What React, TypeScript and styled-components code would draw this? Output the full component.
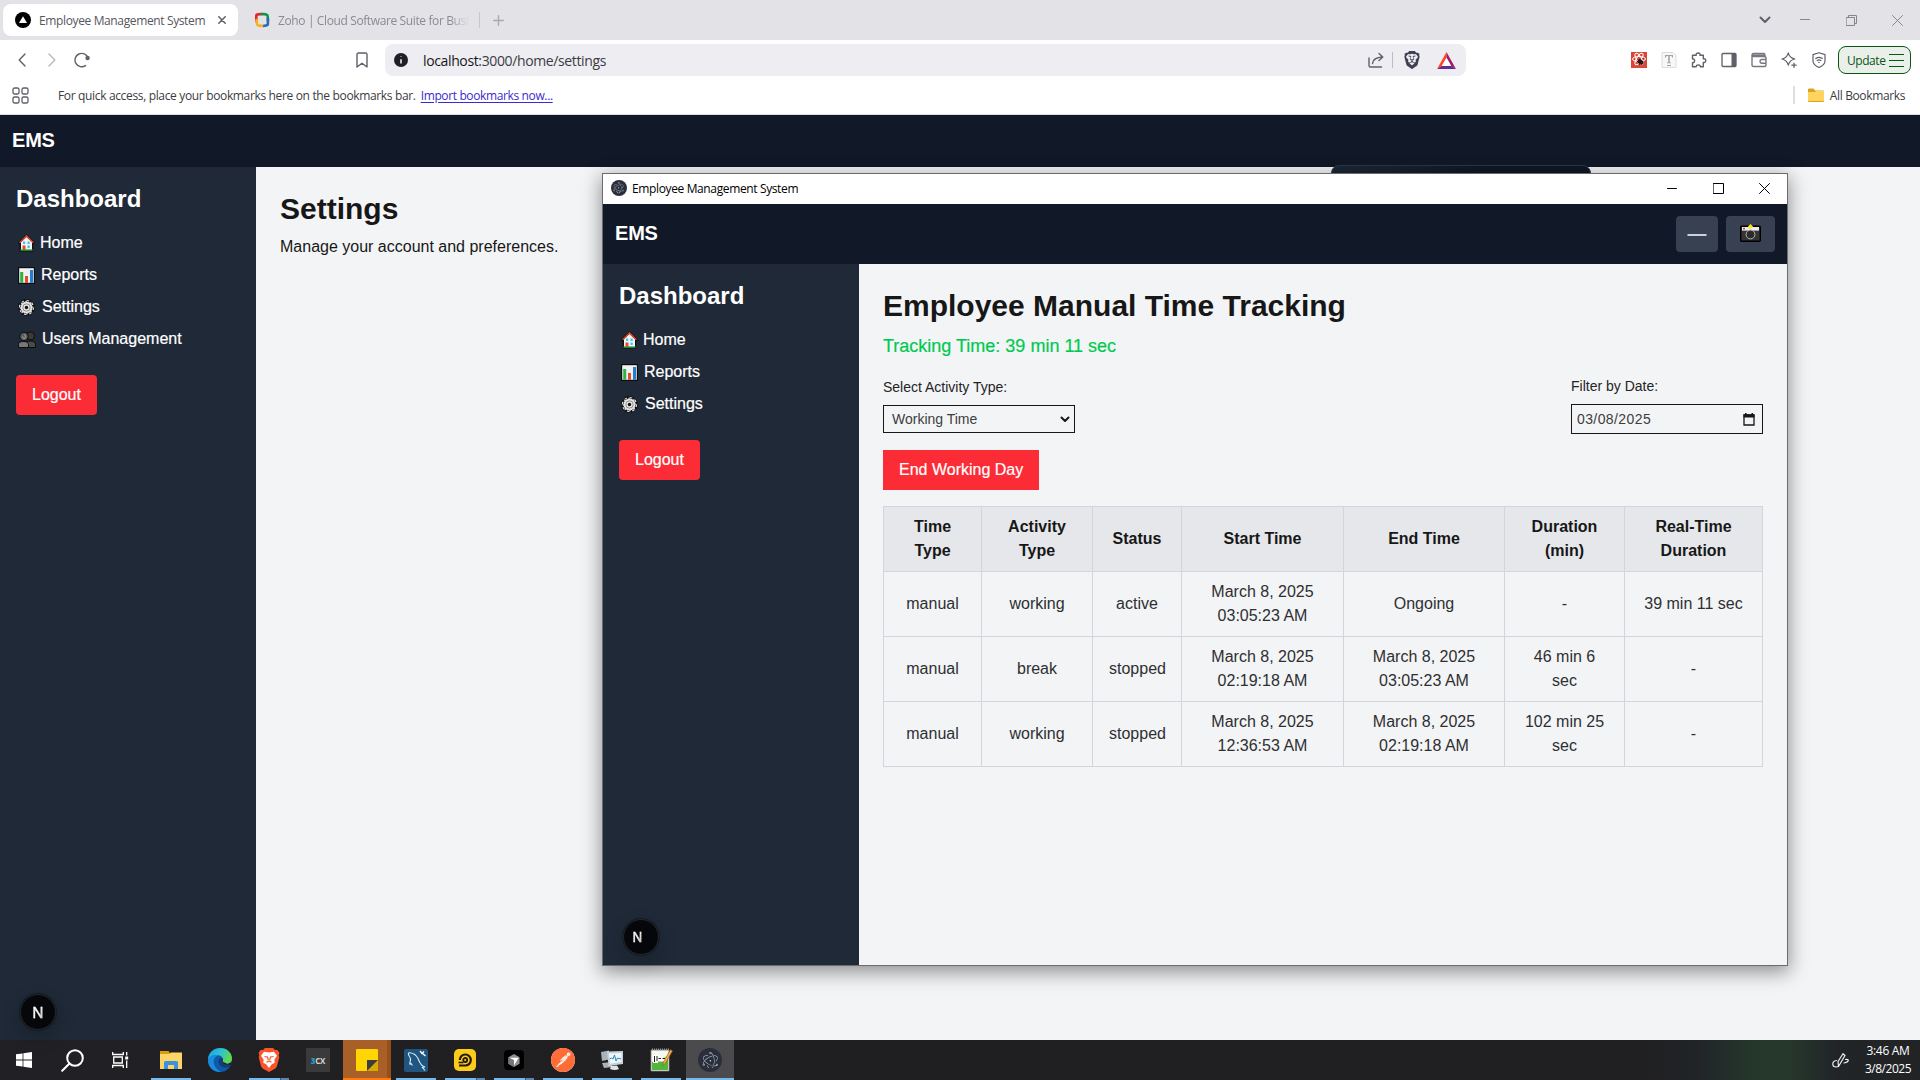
import React from "react";
import styled, { createGlobalStyle, css } from "styled-components";
import { SiBrave, SiElectron, SiPostman } from "react-icons/si";

const uiFont = `"Open Sans", "Noto Sans", sans-serif`;
const webFont = `"Liberation Sans", Arial, sans-serif`;

const GlobalStyle = createGlobalStyle`
  * { box-sizing: border-box; margin: 0; padding: 0; }
  html, body { width: 1920px; height: 1080px; overflow: hidden; }
  body { font-family: ${webFont}; color: #171717; }
  svg { display: block; flex: none; }
  button { border: 0; background: none; font: inherit; color: inherit; }
`;

/* ---------- desktop ---------- */
const Desktop = styled.div`
  position: relative;
  width: 1920px;
  height: 1080px;
  display: flex;
  flex-direction: column;
  overflow: hidden;
`;

const UiText = styled.span<{ $color?: string; $size?: number; $track?: number }>`
  font-family: ${uiFont};
  font-size: ${(p) => p.$size ?? 12}px;
  letter-spacing: ${(p) => p.$track ?? -0.37}px;
  color: ${(p) => p.$color ?? "#3b3b43"};
  white-space: nowrap;
`;

/* ---------- browser chrome ---------- */
const TabStrip = styled.div`
  flex: none;
  height: 40px;
  padding: 4px 0 4px 3px;
  display: flex;
  align-items: center;
  background: #e3e2e7;
`;
const Tab = styled.div<{ $active?: boolean }>`
  display: flex;
  align-items: center;
  height: 32px;
  border-radius: 8px;
  ${(p) =>
    p.$active
      ? css`
          width: 235px;
          padding-left: 12px;
          background: #fff;
        `
      : css`
          width: 241px;
          padding-left: 16px;
        `}
`;
const TabLabel = styled(UiText)<{ $w: number; $fade?: boolean }>`
  width: ${(p) => p.$w}px;
  margin-left: 8px;
  ${(p) =>
    p.$fade &&
    css`
      mask-image: linear-gradient(90deg, #000 90%, transparent);
    `}
`;
const VLine = styled.i<{ $h: number; $color: string; $w?: number }>`
  flex: none;
  width: ${(p) => p.$w ?? 1}px;
  height: ${(p) => p.$h}px;
  background: ${(p) => p.$color};
`;
const Spacer = styled.div`
  flex: 1;
`;
const Slot = styled.div<{ $w?: number; $padLeft?: number }>`
  flex: none;
  width: ${(p) => p.$w ?? 30}px;
  padding-left: ${(p) => p.$padLeft ?? 0}px;
  display: flex;
  align-items: center;
  justify-content: center;
`;
const Toolbar = styled.div`
  flex: none;
  height: 40px;
  padding: 0 9px 0 7px;
  display: flex;
  align-items: center;
  background: #fff;
`;
const NavSlots = styled.div`
  display: flex;
  width: 340px;
`;
const AddressBar = styled.div`
  width: 1081px;
  height: 32px;
  margin: 0 158px 0 8px;
  padding: 0 4px 0 8px;
  display: flex;
  align-items: center;
  border-radius: 8px;
  background: #eeedf2;
`;
const Url = styled(UiText)`
  margin-left: 14px;
  b {
    font-weight: 400;
    color: #17171c;
  }
`;
const UpdateButton = styled.button`
  width: 73px;
  height: 28px;
  margin-left: 4px;
  padding: 0 6px 0 8px;
  display: flex;
  align-items: center;
  justify-content: space-between;
  border: 1px solid #0b5512;
  border-radius: 8px;
  background: #e9f0ea;
`;
const Burger = styled.span`
  width: 15px;
  height: 13px;
  border: solid #0b5512;
  border-width: 1px 0;
  display: flex;
  align-items: center;
  &::before {
    content: "";
    width: 100%;
    height: 1px;
    background: #0b5512;
  }
`;
const BookmarksBar = styled.div`
  flex: none;
  height: 35px;
  padding: 0 15px 4px 12px;
  display: flex;
  align-items: center;
  border-bottom: 1px solid #dcdce0;
  background: #fff;
`;
const ImportLink = styled(UiText)`
  margin-left: 5px;
  text-decoration: underline;
  text-underline-offset: 2px;
`;

/* ---------- EMS web app ---------- */
const Page = styled.div`
  flex: 1;
  min-height: 0;
  display: flex;
  flex-direction: column;
  background: #f3f4f6;
`;
const TopBar = styled.header<{ $h: number }>`
  flex: none;
  height: ${(p) => p.$h}px;
  padding: 0 12px;
  display: flex;
  align-items: center;
  gap: 8px;
  background: #111827;
`;
const Brand = styled.div`
  flex: 1;
  padding-bottom: 2px;
  font-size: 20px;
  font-weight: 700;
  line-height: 28px;
  letter-spacing: -0.2px;
  color: #fff;
`;
const Columns = styled.div`
  flex: 1;
  min-height: 0;
  display: flex;
`;
const SideBar = styled.aside`
  flex: none;
  width: 256px;
  padding: 16px;
  background: #1f2937;
  color: #fff;
`;
const SideTitle = styled.h2`
  margin-bottom: 16px;
  font-size: 24px;
  line-height: 32px;
  font-weight: 700;
`;
const NavList = styled.ul`
  list-style: none;
  display: flex;
  flex-direction: column;
  gap: 8px;
`;
const NavItem = styled.li<{ $icon: number }>`
  display: flex;
  align-items: center;
  height: 24px;
  font-size: 16px;
  -webkit-text-stroke: 0.2px #fff;
  > svg {
    margin: 0 ${(p) => p.$icon}px 0 2px;
  }
`;
const RedButton = styled.button<{ $rounded?: boolean; $top: number }>`
  display: block;
  height: 40px;
  margin-top: ${(p) => p.$top}px;
  padding: 0 16px;
  border-radius: ${(p) => (p.$rounded ? 4 : 0)}px;
  background: #fb2c36;
  color: #fff;
  font-size: 16px;
  -webkit-text-stroke: 0.2px #fff;
`;
const Main = styled.main`
  flex: 1;
  min-width: 0;
  padding: 24px;
`;
const Heading = styled.h1`
  font-size: 30px;
  line-height: 36px;
  font-weight: 700;
  margin-bottom: 8px;
  white-space: nowrap;
`;
const Paragraph = styled.p`
  font-size: 16px;
  line-height: 24px;
`;
const DevBadge = styled.div<{ $x: number; $y: number; $shift?: number }>`
  position: absolute;
  left: ${(p) => p.$x}px;
  top: ${(p) => p.$y}px;
  width: 36px;
  height: 36px;
  padding-right: ${(p) => p.$shift ?? 0}px;
  border-radius: 50%;
  display: flex;
  align-items: center;
  justify-content: center;
  background: #05070a;
  border: 1px solid #26282b;
  box-shadow: 0 0 0 1px #131a24, 0 8px 20px rgba(0, 0, 0, 0.18);
  span {
    font: 400 ${(p) => (p.$shift ? 13 : 15)}px/1 Inter, sans-serif;
    color: transparent;
    background: linear-gradient(100deg, #fff 60%, #888);
    background-clip: text;
    -webkit-text-stroke: 0.3px rgba(255, 255, 255, 0.6);
  }
`;

/* ---------- floating desktop window ---------- */
const HiddenPopup = styled.div`
  position: absolute;
  left: 1331px;
  top: 165px;
  width: 260px;
  height: 40px;
  border-radius: 8px;
  border: 1px solid #2b3644;
  background: linear-gradient(90deg, #1c2836, #101725 60%);
`;
const Window = styled.section`
  position: absolute;
  left: 602px;
  top: 173px;
  width: 1186px;
  height: 793px;
  display: flex;
  flex-direction: column;
  border: 1px solid #6b6c6e;
  background: #f3f4f6;
  box-shadow: 0 5px 18px 1px rgba(0, 0, 0, 0.42);
`;
const TitleBar = styled.div`
  flex: none;
  height: 30px;
  padding: 0 0 2px 8px;
  display: flex;
  align-items: center;
  background: #fff;
`;
const AppIcon = styled.span<{ $size: number }>`
  flex: none;
  width: ${(p) => p.$size}px;
  height: ${(p) => p.$size}px;
  display: flex;
  align-items: center;
  justify-content: center;
  border-radius: 50%;
  background: #2b2e3a;
  color: #bfdfe4;
`;
const WinTitle = styled(UiText)`
  flex: 1;
  margin-left: 5px;
`;
const HeaderButton = styled.button<{ $w: number }>`
  width: ${(p) => p.$w}px;
  height: 36px;
  padding-bottom: 2px;
  display: flex;
  align-items: center;
  justify-content: center;
  border-radius: 4px;
  background: #374151;
`;
const HeaderActions = styled.div`
  display: flex;
  gap: 8px;
`;
const Tracking = styled.p`
  font-size: 18px;
  line-height: 28px;
  color: #00c951;
  margin-bottom: 16px;
  -webkit-text-stroke: 0.2px #00c951;
`;
const Filters = styled.div`
  display: flex;
  justify-content: space-between;
  align-items: center;
`;
const Field = styled.label`
  width: 192px;
  font-size: 14px;
  line-height: 20px;
  color: #232425;
`;
const FieldBox = styled.div<{ $h: number; $padLeft: number; $padRight: number; $track?: number }>`
  height: ${(p) => p.$h}px;
  margin-top: 8px;
  padding: 0 ${(p) => p.$padRight}px 0 ${(p) => p.$padLeft}px;
  display: flex;
  align-items: center;
  justify-content: space-between;
  border: 1px solid #171717;
  color: #3c3d3f;
  letter-spacing: ${(p) => p.$track ?? 0}px;
`;
const Table = styled.table`
  width: 879px;
  margin-top: 16px;
  border-collapse: collapse;
  table-layout: fixed;
  font-size: 16px;
  line-height: 24px;
  text-align: center;
  th,
  td {
    height: 65px;
    padding: 8px 16px;
    border: 1px solid #d1d5dc;
    vertical-align: middle;
  }
  th {
    font-weight: 700;
    background: #e5e7eb;
  }
  td {
    color: #2e2f31;
  }
`;

/* ---------- taskbar ---------- */
const TaskBar = styled.footer`
  flex: none;
  height: 40px;
  display: flex;
  background: linear-gradient(90deg, #212125 0, #1f1f21 40%, #202022 1650px, #212528 1700px, #26372c 1755px, #26372c 1790px, #212528 1835px, #222325 100%);
`;
const Task = styled.div<{ $bg?: string; $gap?: number }>`
  position: relative;
  width: 48px;
  margin-right: ${(p) => p.$gap ?? 1}px;
  display: flex;
  align-items: center;
  justify-content: center;
  background: ${(p) => p.$bg ?? "transparent"};
`;
const Running = styled.i<{ $stack?: boolean; $full?: boolean; $color?: string }>`
  position: absolute;
  bottom: 0;
  left: ${(p) => (p.$full ? 0 : 4)}px;
  width: ${(p) => (p.$full ? 48 : 40)}px;
  height: 2px;
  background: ${(p) => p.$color ?? (p.$stack ? "linear-gradient(90deg, #76b9ed 31px, #36587a 31px, #36587a 32px, #5a86ad 32px)" : "#76b9ed")};
`;
const Tile = styled.span<{ $bg: string; $size: number; $radius?: number }>`
  width: ${(p) => p.$size}px;
  height: ${(p) => p.$size}px;
  border-radius: ${(p) => p.$radius ?? 0}px;
  display: flex;
  align-items: center;
  justify-content: center;
  background: ${(p) => p.$bg};
`;
const ThreeCx = styled.span`
  font: 700 8px ${uiFont};
  letter-spacing: -0.2px;
  color: #d4d4d4;
  b {
    color: #1d9bd1;
  }
`;
const Clock = styled.div`
  width: 64px;
  padding: 2px 0;
  display: flex;
  flex-direction: column;
  align-items: center;
  justify-content: center;
  line-height: 18px;
`;

/* ---------- icons ---------- */
type LineProps = { w?: number; h?: number; box: string; color?: string; sw?: number; children: React.ReactNode };
const Line = ({ w = 16, h = 16, box, color = "#5f6069", sw = 1.4, children }: LineProps) => (
  <svg width={w} height={h} viewBox={box} fill="none" stroke={color} strokeWidth={sw} strokeLinecap="round" strokeLinejoin="round">
    {children}
  </svg>
);

const Globe = () => (
  <svg width="16" height="16" viewBox="0 0 16 16">
    <circle cx="8" cy="8" r="8" />
    <path d="M8 4.2 12 11H4z" fill="#fff" />
  </svg>
);
const ZohoIcon = () => (
  <svg width="16" height="16" viewBox="0 0 16 16" fill="none" strokeWidth="2.6" strokeLinecap="round">
    <path d="M2.3 9V4Q2.3 2.5 4 2.4L8.5 2" stroke="#e42527" />
    <path d="M8 2l4.2.4Q13.6 2.7 13.7 4l.2 4" stroke="#089949" />
    <path d="M13.9 7v4.6q0 1.7-1.6 1.9L9 14" stroke="#226db4" />
    <path d="M2.5 8l.5 3.8Q3.2 13.4 5 13.6l3 .3" stroke="#f9b21d" />
  </svg>
);
const BatIcon = () => (
  <svg width="19" height="17" viewBox="0 0 20 18">
    <path d="M10 0 0 18l5-3 5-9z" fill="#ff4724" />
    <path d="M10 0 20 18l-5-3-5-9z" fill="#9e1f63" />
    <path d="M0 18h20l-5-3.2H5z" fill="#662d91" />
    <path d="M10 6 5 14.8h10z" fill="#fff" />
  </svg>
);
const RedExtension = () => (
  <svg width="16" height="16" viewBox="0 0 16 16">
    <rect width="16" height="16" fill="#dc4437" />
    <g fill="none" stroke="#fff" strokeWidth="1">
      <ellipse cx="8" cy="7" rx="6.5" ry="2.5" />
      <ellipse cx="8" cy="7" rx="6.5" ry="2.5" transform="rotate(60 8 7)" />
      <ellipse cx="8" cy="7" rx="6.5" ry="2.5" transform="rotate(120 8 7)" />
    </g>
    <ellipse cx="9.5" cy="10" rx="3.2" ry="2.4" transform="rotate(40 9.5 10)" fill="#221a1a" />
    <path d="m6 10 2-2m0 5 1.5-2m2-4L12.500 6" stroke="#221a1a" />
  </svg>
);
const TypeExtension = () => (
  <svg width="16" height="16" viewBox="0 0 16 16">
    <path d="M1 .5h11l3 3v12H1z" fill="#f7f7f7" stroke="#dcdcdc" />
    <path d="M4 3h8v2.500h-.8L10.500 4H8.800v6.500H10v.8H6v-.8h1.200V4H5.500l-.7 1.500H4zM6 13h4v.9H6z" fill="#a3a3a3" />
  </svg>
);
const Folder = () => (
  <svg width="16" height="14" viewBox="0 0 16 14">
    <path d="M0 1.500Q0 .5 1 .5h4.500L7 2.500h8q1 0 1 1V13q0 1-1 1H1q-1 0-1-1z" fill="#d9a520" />
    <path d="M0 4h7l1-1h8v9.200q0 .8-.8.8H.8q-.8 0-.8-.8z" fill="#ffd45e" />
  </svg>
);

const HouseEmoji = () => (
  <svg width="17" height="18" viewBox="0 0 17 18">
    <path d="M8.500.5 16.500 8v2l-1.300.5V17.500H1.500V10.500L.5 10V8z" fill="#111" />
    <path d="M8.500 3 14 8.300V16H3V8.300z" fill="#f4f4f4" />
    <path d="M1.600 8.800 8.500 2l6.900 6.800" fill="none" stroke="#e8492f" strokeWidth="1.400" />
    <path d="M5 7.500h2.200V10H5zM9.500 7.500h2.200V10H9.500zM9.500 11.500h2.200V14H9.500z" fill="#39c5f3" />
    <path d="M4.500 11.500h3V16h-3z" fill="#e8492f" />
    <path d="M2.500 16h12" stroke="#2eae3c" strokeWidth="1.400" />
  </svg>
);
const ChartEmoji = () => (
  <svg width="17" height="17" viewBox="0 0 17 17">
    <rect width="17" height="17" fill="#0c0c0c" />
    <rect x="1.200" y="1.200" width="14.600" height="14.600" fill="#f1f1f1" />
    <rect x="2.200" y="5" width="3" height="10.800" fill="#2fb344" />
    <rect x="7" y="9" width="3" height="6.800" fill="#e8492f" />
    <rect x="12" y="3" width="3" height="12.800" fill="#1f7fd1" />
  </svg>
);
const GearEmoji = () => (
  <svg width="17" height="17" viewBox="0 0 17 17">
    <circle cx="8.500" cy="8.500" r="6.800" fill="#e4e4e4" stroke="#0c0c0c" strokeWidth="3.400" strokeDasharray="4 1.340" />
    <circle cx="8.500" cy="8.500" r="7" fill="none" stroke="#e4e4e4" strokeWidth="1.200" strokeDasharray="2.600 2.900" />
    <circle cx="8.500" cy="8.500" r="6" fill="#e4e4e4" />
    <circle cx="8.500" cy="8.500" r="3.700" fill="none" stroke="#8d8d8d" strokeWidth="1" />
    <circle cx="8.500" cy="8.500" r="1.700" fill="#111" />
  </svg>
);
const PeopleEmoji = () => (
  <svg width="18" height="18" viewBox="0 0 18 18">
    <path d="M8 17.500v-3Q8 11 12.500 11q5 0 5 3.500v3z" fill="#4a4a4a" stroke="#0c0c0c" />
    <circle cx="12.500" cy="6" r="4" fill="#3a3a3a" stroke="#0c0c0c" />
    <path d="M.5 17.500v-2.800Q.5 11.500 5.500 11.500t5 3.200v2.800z" fill="#777" stroke="#0c0c0c" />
    <circle cx="6" cy="6.500" r="4.200" fill="#5c5c5c" stroke="#0c0c0c" />
    <path d="M4.500 6.500q0 2 1.500 2t1.500-2T6 4.500" fill="none" stroke="#aaa" strokeWidth=".8" />
  </svg>
);
const CameraEmoji = () => (
  <svg width="21" height="18" viewBox="0 0 21 18">
    <rect x=".7" y="2.200" width="19.600" height="15" rx="1" fill="#343434" stroke="#000" strokeWidth="1.400" />
    <rect x="2" y="3" width="17" height="3.600" fill="#ececec" />
    <rect x="3" y="3.800" width="2" height="1.600" fill="#e33" />
    <circle cx="10.500" cy="10.500" r="4.400" fill="#2a2a2a" stroke="#b5b5b5" strokeWidth="1" />
    <path d="M10.500 0 13 2.500 10.500 5 8 2.500z" fill="#ffe800" />
  </svg>
);
const Electron = ({ s }: { s: number }) => (
  <AppIcon $size={s}>
    <SiElectron size={s * 0.7} />
  </AppIcon>
);

const NAV = [
  { label: "Home", gap: 5, icon: <HouseEmoji /> },
  { label: "Reports", gap: 6, icon: <ChartEmoji /> },
  { label: "Settings", gap: 7, icon: <GearEmoji /> },
  { label: "Users Management", gap: 6, icon: <PeopleEmoji /> },
];

const SidePanel = ({ count }: { count: number }) => (
  <SideBar>
    <SideTitle>Dashboard</SideTitle>
    <NavList>
      {NAV.slice(0, count).map((n) => (
        <NavItem key={n.label} $icon={n.gap}>
          {n.icon}
          {n.label}
        </NavItem>
      ))}
    </NavList>
    <RedButton $rounded $top={24}>
      Logout
    </RedButton>
  </SideBar>
);

const COLS = [98, 111, 89, 162, 161, 120, 138];
const HEADS = ["Time Type", "Activity Type", "Status", "Start Time", "End Time", "Duration (min)", "Real-Time Duration"];
const ROWS = [
  ["manual", "working", "active", "March 8, 2025 03:05:23 AM", "Ongoing", "-", "39 min 11 sec"],
  ["manual", "break", "stopped", "March 8, 2025 02:19:18 AM", "March 8, 2025 03:05:23 AM", "46 min 6 sec", "-"],
  ["manual", "working", "stopped", "March 8, 2025 12:36:53 AM", "March 8, 2025 02:19:18 AM", "102 min 25 sec", "-"],
];

const BrowserChrome = () => (
  <>
    <TabStrip>
      <Tab $active>
        <Globe />
        <TabLabel $w={167} $color="#56565e">Employee Management System</TabLabel>
        <Slot $w={32}>
          <Line w={8} h={8} box="0 0 8 8" sw={1.5}><path d="M.8.800l6.400 6.400M7.200.800.800 7.200" /></Line>
        </Slot>
      </Tab>
      <Tab>
        <ZohoIcon />
        <TabLabel $w={191} $fade $color="#8a8a91" $track={-0.38}>Zoho | Cloud Software Suite for Busi</TabLabel>
      </Tab>
      <VLine $h={16} $color="#c8c7cd" />
      <Slot $w={36}>
        <Line w={11} h={11} box="0 0 11 11" color="#a9a9af"><path d="M5.500.700v9.600M.700 5.500h9.600" /></Line>
      </Slot>
      <Spacer />
      <Slot $w={34}>
        <Line w={12} h={8} box="0 0 12 8" sw={2}><path d="M1.500 1.500 6 6l4.500-4.500" /></Line>
      </Slot>
      <Slot $w={46}>
        <Line w={10} h={10} box="0 0 10 10" color="#85858b" sw={1}><path d="M.5 4.500h9" /></Line>
      </Slot>
      <Slot $w={46}>
        <Line w={11} h={11} box="0 0 11 11" color="#85858b" sw={1}><path d="M.5 2.500h8v8h-8zM2.500 2.500v-2h8v8h-2" /></Line>
      </Slot>
      <Slot $w={46}>
        <Line w={11} h={11} box="0 0 11 11" color="#85858b" sw={1}><path d="M.500.500l10 10M10.500.500l-10 10" /></Line>
      </Slot>
    </TabStrip>

    <Toolbar>
      <NavSlots>
        <Slot><Line w={8} h={14} box="0 0 8 14"><path d="M7 1 1.200 7 7 13" /></Line></Slot>
        <Slot><Line w={8} h={14} box="0 0 8 14" color="#b9b9be"><path d="M1 1l5.800 6L1 13" /></Line></Slot>
        <Slot>
          <svg width="16" height="16" viewBox="0 0 16 16" fill="none" stroke="#5f6069" strokeWidth="1.400" strokeLinecap="round">
            <path d="M11.500 13.600A6.700 6.700 0 1 1 14 5.800" />
            <circle cx="13.600" cy="6" r="1.500" fill="#5f6069" />
          </svg>
        </Slot>
      </NavSlots>
      <Slot><Line w={12} h={16} box="0 0 12 16"><path d="M1 2.500Q1 1 2.500 1h7Q11 1 11 2.500V15l-5-3.800L1 15z" /></Line></Slot>
      <AddressBar>
        <svg width="16" height="16" viewBox="0 0 16 16">
          <circle cx="8" cy="8" r="7" fill="#1f1f27" />
          <path d="M8 4.500v.6M8 7.200V11.500" stroke="#eeedf2" strokeWidth="1.600" />
        </svg>
        <Url $size={14} $track={-0.37}><b>localhost</b>:3000/home/settings</Url>
        <Spacer />
        <Slot $w={32}>
          <Line w={16} h={16} box="0 0 16 16"><path d="M1 6v7.500Q1 15 2.500 15h11M4.500 11.500Q5 5.500 14.500 5M11 1.500 14.800 5 11 8.500" /></Line>
        </Slot>
        <VLine $h={16} $color="#bdbcc4" />
        <Slot $w={38}><SiBrave size={18} color="#3f4153" /></Slot>
        <Slot $w={31}><BatIcon /></Slot>
      </AddressBar>
      <Slot><RedExtension /></Slot>
      <Slot><TypeExtension /></Slot>
      <Slot>
        <Line box="0 0 16 16"><path d="M1.500 3.200h3.700C4.500.200 9.800.200 9 3.200h3.300v3.600c3.300-.9 3.300 4.400 0 3.600V14.800H9.400c.300-2.600-4.400-2.600-4.200 0H1.500v-4c2.800.2 2.800-4.200 0-4z" /></Line>
      </Slot>
      <Slot>
        <svg width="16" height="16" viewBox="0 0 16 16">
          <rect x="1" y="1.500" width="14" height="13" rx="1" fill="none" stroke="#5f6069" strokeWidth="1.300" />
          <path d="M10.500 1.500H15v13h-4.500z" fill="#5f6069" />
        </svg>
      </Slot>
      <Slot>
        <Line box="0 0 16 16" color="#77787f"><path d="M1 5V3Q1 1.500 2.500 1.500h10Q14 1.500 14 3v2M1 4.500h12.500Q15 4.500 15 6v7q0 1.500-1.500 1.500h-11Q1 14.500 1 13zM15 7.500h-4.500q-1.500 0-1.500 1.800t1.500 1.900H15M1.500 3.200h12" /></Line>
      </Slot>
      <Slot>
        <Line box="0 0 16 16" sw={1.2}><path d="M7.300.900Q8.300 5.800 13.800 7q-5.300 1.200-6.500 6.200Q6.100 8.200.900 7 6.200 5.800 7.300.900zM13 11v4.400M10.800 13.200h4.400" /></Line>
      </Slot>
      <Slot>
        <Line box="0 0 16 16" sw={1.2}><path d="M8 .8 14 2.600V9q0 3.800-6 6.500Q2 12.800 2 9V2.600zM4.800 6.500q3.200-2.400 6.400 0M6.200 8.500q1.800-1.200 3.600 0M7.800 10.300h.4" /></Line>
      </Slot>
      <UpdateButton>
        <UiText $color="#0b5512" $track={-0.45}>Update</UiText>
        <Burger />
      </UpdateButton>
    </Toolbar>

    <BookmarksBar>
      <Line w={17} h={17} box="0 0 17 17" sw={1.3}>
        <rect x="1" y="1" width="6" height="6" rx="1.600" />
        <rect x="10" y="1" width="6" height="6" rx="1.600" />
        <rect x="1" y="10" width="6" height="6" rx="1.600" />
        <rect x="10" y="10" width="6" height="6" rx="1.600" />
      </Line>
      <Slot $w={29} />
      <UiText $track={-0.345}>For quick access, place your bookmarks here on the bookmarks bar.</UiText>
      <ImportLink $color="#3a2bd0">Import bookmarks now...</ImportLink>
      <Spacer />
      <VLine $w={2} $h={18} $color="#dddde2" />
      <Slot $w={35} $padLeft={7}><Folder /></Slot>
      <UiText>All Bookmarks</UiText>
    </BookmarksBar>
  </>
);

const EmployeeWindow = () => (
  <Window>
    <TitleBar>
      <Electron s={16} />
      <WinTitle $color="#000">Employee Management System</WinTitle>
      <Slot $w={46}><Line w={10} h={10} box="0 0 10 10" color="#000" sw={1}><path d="M.5 5.500h9" /></Line></Slot>
      <Slot $w={46}><Line w={11} h={11} box="0 0 11 11" color="#000" sw={1}><path d="M.500.500h10v10h-10z" /></Line></Slot>
      <Slot $w={46}><Line w={11} h={11} box="0 0 11 11" color="#000" sw={1}><path d="M.500.500l10 10M10.500.500l-10 10" /></Line></Slot>
    </TitleBar>
    <TopBar $h={60}>
      <Brand>EMS</Brand>
      <HeaderActions>
        <HeaderButton $w={42}>
          <Line w={20} h={6} box="0 0 20 6" color="#fff" sw={1.5}><path d="M1 5h18" /></Line>
        </HeaderButton>
        <HeaderButton $w={49}><CameraEmoji /></HeaderButton>
      </HeaderActions>
    </TopBar>
    <Columns>
      <SidePanel count={3} />
      <Main>
        <Heading>Employee Manual Time Tracking</Heading>
        <Tracking>Tracking Time: 39 min 11 sec</Tracking>
        <Filters>
          <Field>
            Select Activity Type:
            <FieldBox $h={28} $padLeft={8} $padRight={4}>
              Working Time
              <Line w={10} h={7} box="0 0 10 7" color="#171717" sw={2}><path d="M1.500 1.500 5 5l3.500-3.500" /></Line>
            </FieldBox>
          </Field>
          <Field>
            Filter by Date:
            <FieldBox $h={30} $padLeft={5} $padRight={7} $track={0.4}>
              03/08/2025
              <svg width="12" height="13" viewBox="0 0 12 13">
                <path d="M1 2h10v10H1z" fill="none" stroke="#171717" strokeWidth="1.300" />
                <path d="M.500 1.300h11v3.200H.500zM2 0h1.500v2H2zM8.500 0H10v2H8.500z" fill="#171717" />
              </svg>
            </FieldBox>
          </Field>
        </Filters>
        <RedButton $top={16}>End Working Day</RedButton>
        <Table>
          <colgroup>
            {COLS.map((w, i) => (
              <col key={i} width={w} />
            ))}
          </colgroup>
          <thead>
            <tr>
              {HEADS.map((h) => (
                <th key={h}>{h}</th>
              ))}
            </tr>
          </thead>
          <tbody>
            {ROWS.map((r, i) => (
              <tr key={i}>
                {r.map((c, j) => (
                  <td key={j}>{c}</td>
                ))}
              </tr>
            ))}
          </tbody>
        </Table>
      </Main>
    </Columns>
    <DevBadge $x={20} $y={745} $shift={7}><span>N</span></DevBadge>
  </Window>
);

const Taskbar = () => (
  <TaskBar>
    <Task $gap={0}>
      <svg width="16" height="16" viewBox="0 0 16 16" fill="#fff">
        <path d="M0 2.300 6.600 1.400V7.600H0zM7.400 1.300 16 0v7.600H7.400zM0 8.400h6.600v6.200L0 13.700zM7.400 8.400H16V16l-8.600-1.300z" />
      </svg>
    </Task>
    <Task $gap={0}>
      <Line w={23} h={23} box="0 0 23 23" color="#fff" sw={2}><circle cx="14" cy="9" r="7.800" /><path d="M8.500 14.500 1.200 21.800" /></Line>
    </Task>
    <Task $gap={3}>
      <svg width="17" height="16" viewBox="0 0 17 16" fill="none" stroke="#fff" strokeWidth="1.300">
        <path d="M.7 0v2.500h10.600V0M.7 16v-2.500h10.600V16M1.700 5h8.600v6H1.700zM14.700 0v3.500M14.700 8.500V16" />
        <path d="M13.200 4.500h3v3h-3z" fill="#fff" stroke="none" />
      </svg>
    </Task>
    <Task>
      <svg width="22" height="18" viewBox="0 0 22 18">
        <path d="M0 0h8.500L10 2h12v16H0z" fill="#d99b0c" />
        <path d="M0 3h9.500L11 1.500h11V18H0z" fill="#fcd467" />
        <path d="M4 18v-6.500Q4 10 5.500 10h11Q18 10 18 11.500V18h-4v-4H8v4z" fill="#3a93dc" />
      </svg>
      <Running />
    </Task>
    <Task>
      <svg width="24" height="24" viewBox="0 0 24 24">
        <defs>
          <linearGradient id="edgeTop" x1="0" y1="0" x2="1" y2="0.400">
            <stop offset="0" stopColor="#1b9de2" />
            <stop offset=".55" stopColor="#2bc3d2" />
            <stop offset="1" stopColor="#62d84e" />
          </linearGradient>
        </defs>
        <circle cx="12" cy="12" r="12" fill="#0d5cab" />
        <path d="M0 12C0 4.500 6 0 12.500 0 19 0 24 5 24 10.500c0 3.500-2.600 5.500-5.700 5.500-2.600 0-4.300-1-3.800-2 1.400-2 .5-5.500-3-6.500C6.500 6 1.500 8.500 0 12z" fill="url(#edgeTop)" />
        <path d="M0 12.500C1 8.500 6 6.300 10.500 7.300c-3.500 1-5 4-4.800 7 .3 4.200 3.300 7.700 7.300 9.600C5.500 24.500 0 19 0 12.500z" fill="#1a8be0" />
        <path d="M14.500 14c.7-1 .6-3-.6-4.300-2.600.2-4 3-3 5.700 1.200 3.200 5 5.200 10.600 3.600L22.600 16.500l-1.500-1.300c-3 1.500-7 1-6.600-1.200z" fill="#163c72" />
        <path d="M14.600 13.800c-1 1.800 2.400 3.500 6.500 1.600L23.500 14l.3 1.500-1.300 1.700z" fill="#212125" />
      </svg>
    </Task>
    <Task>
      <svg width="22" height="24" viewBox="0 0 22 24">
        <path d="M7 0h8l2 2h2.500l2 3-.8 2.300.6 2-2.400 9.200-1.500 2L11 24l-6.400-3.500-1.500-2L.7 9.300l.6-2L.5 5l2-3H5z" fill="#fb542b" />
        <path d="M11 4.500 16 3.800l3 4-2.700 4 .5 3-3 1.400L11 20l-2.800-3.800-3-1.400.5-3L3 7.800l3-4z" fill="#fff" />
        <path d="M6.500 8.500 9.500 9l.8 3M15.500 8.500l-3 .5-.8 3M8.500 14.300 11 13l2.500 1.300" fill="none" stroke="#fb542b" strokeWidth="1.200" />
      </svg>
      <Running $stack />
    </Task>
    <Task>
      <Tile $bg="#3a3a3a" $size={24}><ThreeCx><b>3</b>CX</ThreeCx></Tile>
    </Task>
    <Task $bg="linear-gradient(90deg, #a85f28 44px, #955017 44px)">
      <svg width="22" height="22" viewBox="0 0 22 22">
        <rect width="22" height="22" rx="1" fill="#ffd502" />
        <path d="M22 11v11H11z" fill="#d9a900" />
        <path d="M22 11 11 22V11z" fill="#3b3d40" />
      </svg>
      <Running $full $color="#ff7a0f" />
    </Task>
    <Task>
      <svg width="24" height="23" viewBox="0 0 24 23">
        <rect width="24" height="23" rx="2" fill="#1f557f" />
        <path d="M8.500 16.500 7 14.500Q5 17 6.300 12 7 9.500 5.500 7.500 3 3.500 6 3.800q5.500.7 8 5.700 1.500 4 3.500 6.500 1.500 1.500 3.500 2l-2.500.5 2.500 3" fill="none" stroke="#d9ecf5" strokeWidth="1.100" />
        <path d="m16 2 2 2.500 2-2m-1.500 2L21.500 7" fill="none" stroke="#fff" strokeWidth="1.400" />
      </svg>
      <Running />
    </Task>
    <Task>
      <Tile $bg="#fccb1c" $size={22} $radius={5}>
        <svg width="16" height="16" viewBox="0 0 16 16" fill="none" stroke="#211c0b" strokeWidth="2.200">
          <path d="M2 13.500h6A5.500 5.500 0 1 0 2.800 8" />
          <circle cx="8.200" cy="8" r="2" strokeWidth="1.800" />
          <path d="M1.500 10.500h5" strokeWidth="1.600" />
        </svg>
      </Tile>
      <Running $stack />
    </Task>
    <Task>
      <Tile $bg="#000" $size={20} $radius={4}>
        <svg width="12" height="13" viewBox="0 0 12 14">
          <path d="M6 0 12 3.500v7L6 14 0 10.500v-7z" fill="#8f8f8f" />
          <path d="M0 3.500 6 6v8L0 10.500z" fill="#777" />
          <path d="M1 4h10L6 12.500V6.500z" fill="#fff" />
        </svg>
      </Tile>
      <Running $stack />
    </Task>
    <Task>
      <Tile $bg="#fff" $size={24} $radius={12}><SiPostman size={24} color="#ff6c37" /></Tile>
      <Running />
    </Task>
    <Task>
      <svg width="24" height="22" viewBox="0 0 24 22">
        <path d="M1 3 9 1.500v9L2 12zM2 14l10-1v5l-8 1z" fill="#a9b2b8" />
        <path d="M7 2.500 23 2v13L8.500 17z" fill="#c9d1d6" />
        <path d="M9 4.500 21.500 4v9L10 14.800z" fill="#eef7fb" />
        <path d="m9.500 10 2-1 1.500 1 1.500-4 1.500 6 1.500-3 3.500 1" fill="none" stroke="#2b83bb" />
        <path d="M11 17l6-.5 2 3.500q-4 2-9 0z" fill="#dfe4e7" />
      </svg>
      <Running />
    </Task>
    <Task>
      <svg width="23" height="24" viewBox="0 0 23 24">
        <path d="M1 2h18v21H1z" fill="#f5f8f0" stroke="#7d837a" strokeWidth=".8" />
        <path d="M2 14 18 8v14H2z" fill="#52b53c" />
        <path d="M3 7h5v2.500h8v4H8V15H3z" fill="#fff" />
        <path d="M4.500 8v6M7 8v5M8.500 10.500h2.500M12.500 10.500h2.500" stroke="#1b1b1b" />
        <path d="M2 1.500h17" stroke="#999" strokeDasharray="1 1" strokeWidth="2" />
        <path d="M20.500 1.500 13.500 14l-1 4 3-3L22.500 3z" fill="#f3b33a" stroke="#9a4a1c" strokeWidth=".6" />
      </svg>
      <Running />
    </Task>
    <Task $bg="#4b4b4d">
      <Electron s={24} />
      <Running $full />
    </Task>
    <Spacer />
    <Slot $w={32}>
      <Line w={17} h={17} box="0 0 17 17" color="#f0f0f0" sw={1.2}>
        <path d="M4.500 8.500Q.8 9 .8 12t3.200 3l2.500-.5L13 3.500l-2-1.800L6 9.500l.5 5M13.500 7.500q3-.5 2.700 1.200T12 11" />
      </Line>
    </Slot>
    <Clock>
      <UiText $color="#fff" $track={-0.32}>3:46 AM</UiText>
      <UiText $color="#fff" $track={-0.48}>3/8/2025</UiText>
    </Clock>
  </TaskBar>
);

export default function App() {
  return (
    <Desktop>
      <GlobalStyle />
      <BrowserChrome />
      <Page>
        <TopBar $h={52}>
          <Brand>EMS</Brand>
        </TopBar>
        <Columns>
          <SidePanel count={4} />
          <Main>
            <Heading>Settings</Heading>
            <Paragraph>Manage your account and preferences.</Paragraph>
          </Main>
        </Columns>
      </Page>
      <Taskbar />
      <DevBadge $x={20} $y={994}><span>N</span></DevBadge>
      <HiddenPopup />
      <EmployeeWindow />
    </Desktop>
  );
}
